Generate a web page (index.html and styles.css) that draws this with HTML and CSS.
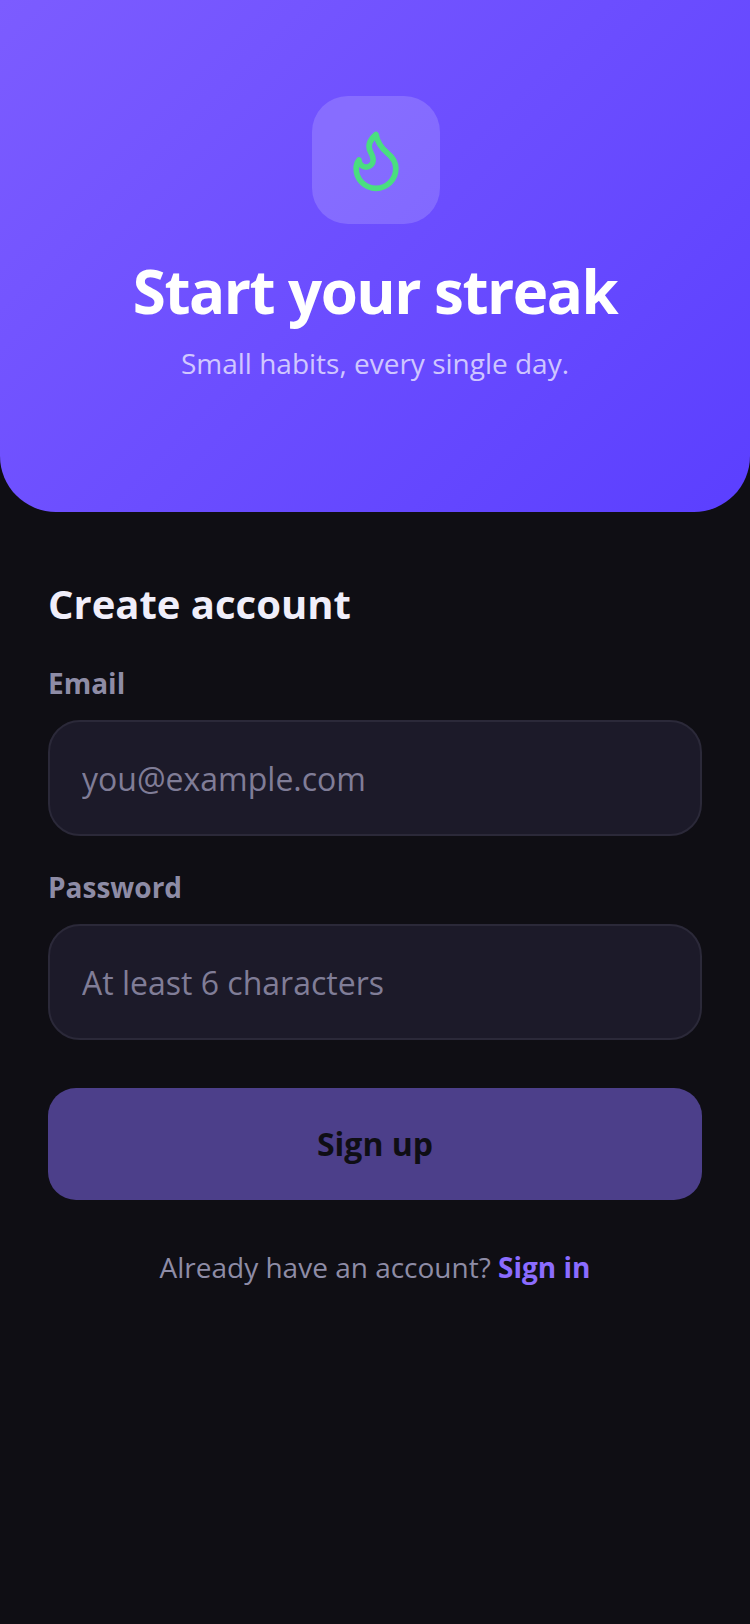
FILE: index.html
```html
<!DOCTYPE html>
<html lang="en">
<head>
    <meta charset="UTF-8">
    <meta name="viewport" content="width=device-width, initial-scale=1.0">
    <title>Start your streak</title>
    <link rel="stylesheet" href="styles.css">
</head>
<body>
    <header class="hero">
        <div class="hero-icon">
            <svg class="flame" viewBox="0 0 24 24" fill="none" stroke="#4ade80" stroke-width="2" stroke-linecap="round" stroke-linejoin="round">
                <path d="M8.5 14.5A2.5 2.5 0 0 0 11 12c0-1.38-.5-2-1-3-1.072-2.143-.224-4.054 2-6 .5 2.5 2 4.9 4 6.5 2 1.6 3 3.5 3 5.5a7 7 0 1 1-14 0c0-1.153.433-2.294 1-3a2.5 2.5 0 0 0 2.5 2.5z"/>
            </svg>
        </div>
        <h1>Start your streak</h1>
        <p class="tagline">Small habits, every single day.</p>
    </header>

    <main class="content">
        <h2>Create account</h2>
        <form class="signup-form">
            <div class="form-group">
                <label for="email">Email</label>
                <input type="email" id="email" placeholder="you@example.com">
            </div>
            <div class="form-group">
                <label for="password">Password</label>
                <input type="password" id="password" placeholder="At least 6 characters">
            </div>
            <button type="button">Sign up</button>
        </form>
        <p class="switch">Already have an account? <a href="#">Sign in</a></p>
    </main>
</body>
</html>
```

FILE: styles.css
```css
* {
    box-sizing: border-box;
}
body {
    margin: 0;
    min-height: 1624px;
    background-color: #0f0e14;
    font-family: "Open Sans", sans-serif;
}
.hero {
    height: 512px;
    padding-top: 96px;
    display: flex;
    flex-direction: column;
    align-items: center;
    background: linear-gradient(135deg, #7c5cff, #5b3fff);
    border-radius: 0 0 56px 56px;
}
.hero-icon {
    width: 128px;
    height: 128px;
    margin-left: 1px;
    display: flex;
    align-items: center;
    justify-content: center;
    background-color: rgba(255, 255, 255, 0.16);
    border-radius: 36px;
}
.flame {
    width: 68px;
    height: 68px;
}
h1 {
    margin: 25px 0 0;
    color: #fff;
    font-size: 60px;
    line-height: 84px;
    font-weight: 700;
    letter-spacing: -1.5px;
}
.tagline {
    margin: 11px 0 0;
    color: rgba(255, 255, 255, 0.7);
    font-size: 28px;
    line-height: 38px;
}
.content {
    padding: 64px 48px 0;
}
h2 {
    margin: 0;
    color: #f0eefa;
    font-size: 40px;
    line-height: 56px;
    font-weight: 700;
}
.form-group {
    margin-top: 32px;
}
label {
    display: block;
    margin-bottom: 18px;
    color: #8e8ca6;
    font-size: 28px;
    line-height: 38px;
    font-weight: 700;
}
input {
    display: block;
    width: 100%;
    height: 116px;
    padding: 0 32px;
    background-color: #1c1a29;
    border: 2px solid #2b2939;
    border-radius: 32px;
    color: #f0eefa;
    font-family: inherit;
    font-size: 32px;
}
input::placeholder {
    color: #807d97;
    opacity: 1;
}
button {
    display: block;
    width: 100%;
    height: 112px;
    margin-top: 48px;
    padding: 0 0 2px;
    background-color: #4c3f8a;
    border: none;
    border-radius: 28px;
    color: #0f0e14;
    font-family: inherit;
    font-size: 32px;
    font-weight: 700;
}
.switch {
    margin: 47px 0 0;
    text-align: center;
    color: #8e8ca6;
    font-size: 28px;
    line-height: 40px;
}
.switch a {
    color: #8b6cff;
    font-weight: 700;
    text-decoration: none;
}
```
